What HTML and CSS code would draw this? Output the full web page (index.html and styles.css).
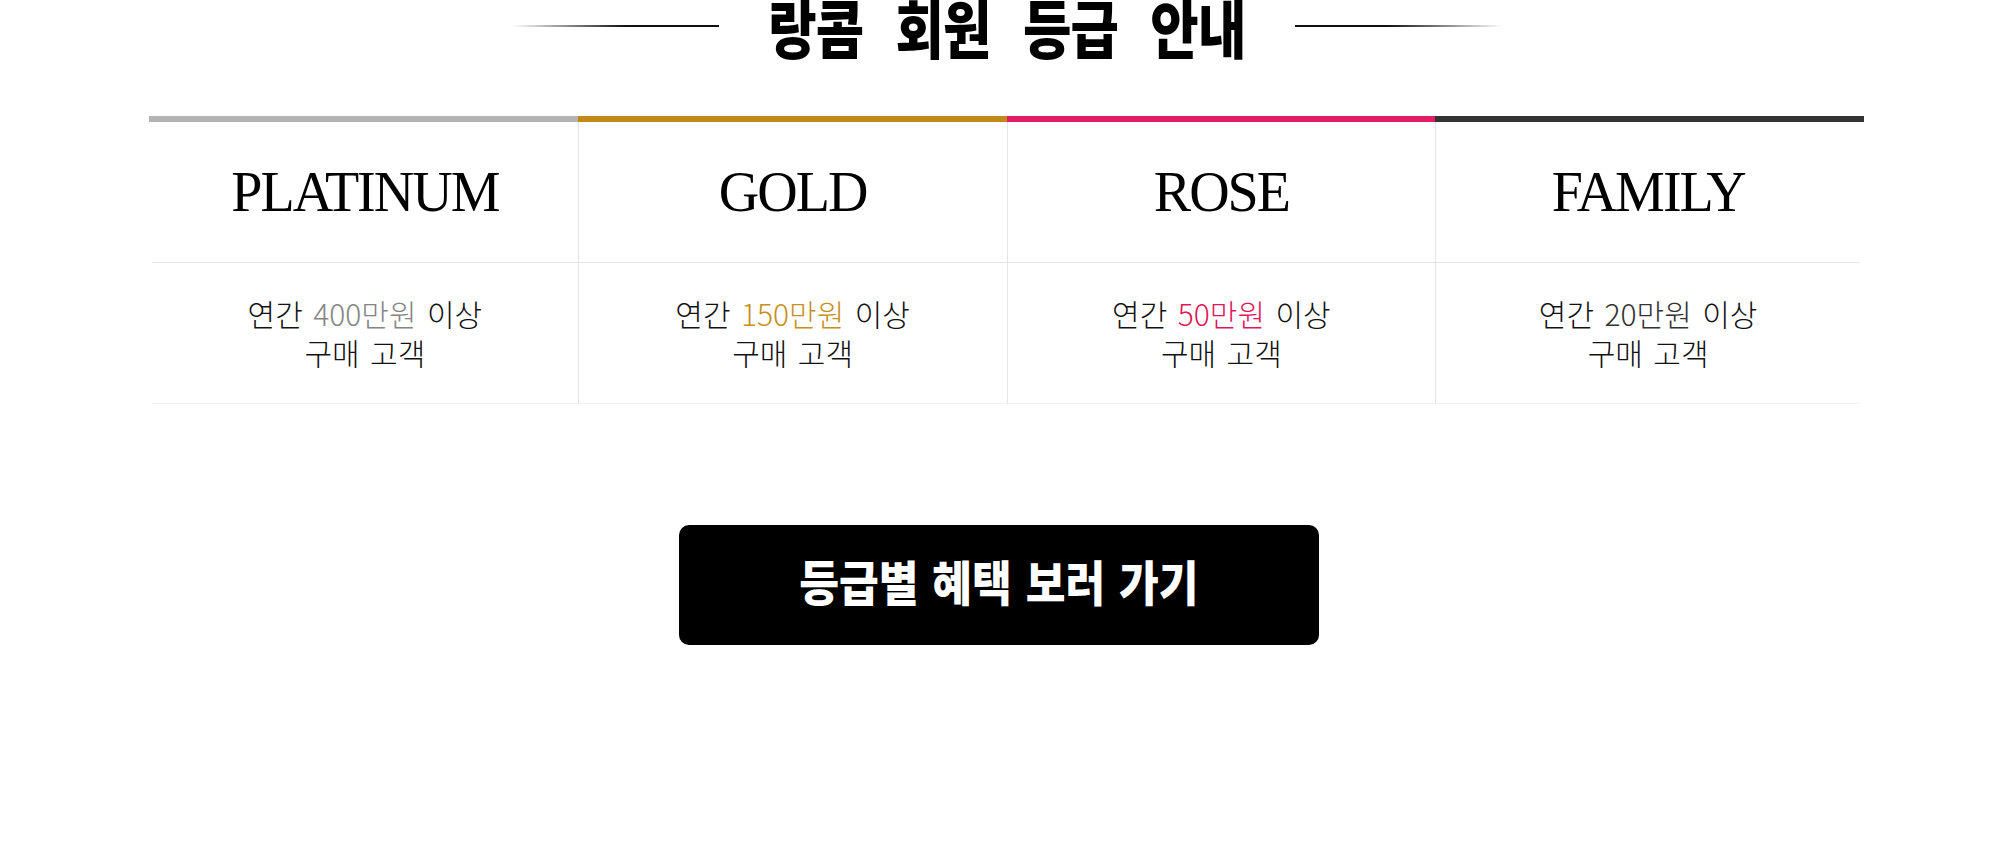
FILE: index.html
```html
<!DOCTYPE html>
<html lang="ko">
<head>
    <meta charset="UTF-8">
    <meta name="viewport" content="width=device-width, initial-scale=1.0">
    <title>랑콤 회원 등급 안내</title>
    <link rel="stylesheet" href="styles.css">
</head>
<body>
    <div class="page">
        <div class="inner">
            <div class="title-row">
                <span class="line line-left"></span>
                <h2 class="title"><span>랑콤 회원 등급 안내</span></h2>
                <span class="line line-right"></span>
            </div>

            <div class="grades">
                <div class="grade platinum">
                    <div class="grade-name">PLATINUM</div>
                    <div class="grade-desc"><p>연간 <em>400만원</em> 이상<br>구매 고객</p></div>
                </div>
                <div class="grade gold">
                    <div class="grade-name">GOLD</div>
                    <div class="grade-desc"><p>연간 <em>150만원</em> 이상<br>구매 고객</p></div>
                </div>
                <div class="grade rose">
                    <div class="grade-name">ROSE</div>
                    <div class="grade-desc"><p>연간 <em>50만원</em> 이상<br>구매 고객</p></div>
                </div>
                <div class="grade family">
                    <div class="grade-name">FAMILY</div>
                    <div class="grade-desc"><p>연간 <em>20만원</em> 이상<br>구매 고객</p></div>
                </div>
            </div>
        </div>

        <a class="btn" href="#"><span>등급별 혜택 보러 가기</span></a>
    </div>
</body>
</html>
```

FILE: styles.css
```css
* { margin: 0; padding: 0; box-sizing: border-box; }
body {
    font-family: "Noto Sans CJK KR", "Noto Sans", sans-serif;
    background: #ffffff;
    color: #1a1a1a;
}
.inner {
    width: 1715px;
    margin-left: 149px;
}
.title-row {
    display: flex;
    align-items: center;
    justify-content: center;
    height: 52px;
    gap: 51px;
    margin-bottom: 64px;
}
.line {
    width: 207px;
    height: 2px;
}
.line-left {
    background: linear-gradient(to right, rgba(0, 0, 0, 0) 0%, #111 55%);
}
.line-right {
    background: linear-gradient(to right, #111 45%, rgba(0, 0, 0, 0) 100%);
}
.title {
    width: 474px;
    display: flex;
    justify-content: center;
    font-size: 63px;
    line-height: 42px;
    font-weight: 900;
    color: #000;
    white-space: nowrap;
}
.title span {
    display: inline-block;
    transform: scaleX(0.835);
    word-spacing: 22px;
    letter-spacing: -1px;
}
.grades {
    display: grid;
    grid-template-columns: repeat(4, 1fr);
}
.grade {
    border-top: 6px solid #b3b3b3;
    display: grid;
    grid-template-rows: 141px 141px;
}
.grade.gold { border-top-color: #bf8a17; }
.grade.rose { border-top-color: #e21c66; }
.grade.family { border-top-color: #333333; }
.grade + .grade .grade-name,
.grade + .grade .grade-desc {
    border-left: 1px solid #e4e4e4;
}
.grade-name {
    display: flex;
    align-items: center;
    justify-content: center;
    border-bottom: 1px solid #e6e6e6;
    font-family: "Liberation Serif", serif;
    font-size: 56px;
    line-height: 1;
    letter-spacing: -2px;
    color: #000;
}
.grade-desc {
    display: flex;
    align-items: center;
    justify-content: center;
    text-align: center;
    border-bottom: 1px solid #f1f1f1;
    font-size: 30px;
    line-height: 39px;
    font-weight: 300;
    word-spacing: 2px;
    color: #111;
}
.grade-desc em { font-style: normal; }
.platinum .grade-desc em { color: #858585; }
.gold .grade-desc em { color: #c6901c; }
.rose .grade-desc em { color: #e0175b; }
.family .grade-desc em { color: #333333; }
.platinum .grade-name,
.platinum .grade-desc { margin-left: 3px; }
.family .grade-name,
.family .grade-desc { margin-right: 4px; }
.btn {
    display: flex;
    align-items: center;
    justify-content: center;
    width: 640px;
    height: 120px;
    margin: 121px auto 0;
    padding-bottom: 10px;
    background: #000;
    border-radius: 10px;
    color: #fff;
    text-decoration: none;
    font-size: 48px;
    font-weight: 900;
    white-space: nowrap;
}
.btn span {
    display: inline-block;
    transform: scaleX(0.9);
    word-spacing: 2px;
}
```
